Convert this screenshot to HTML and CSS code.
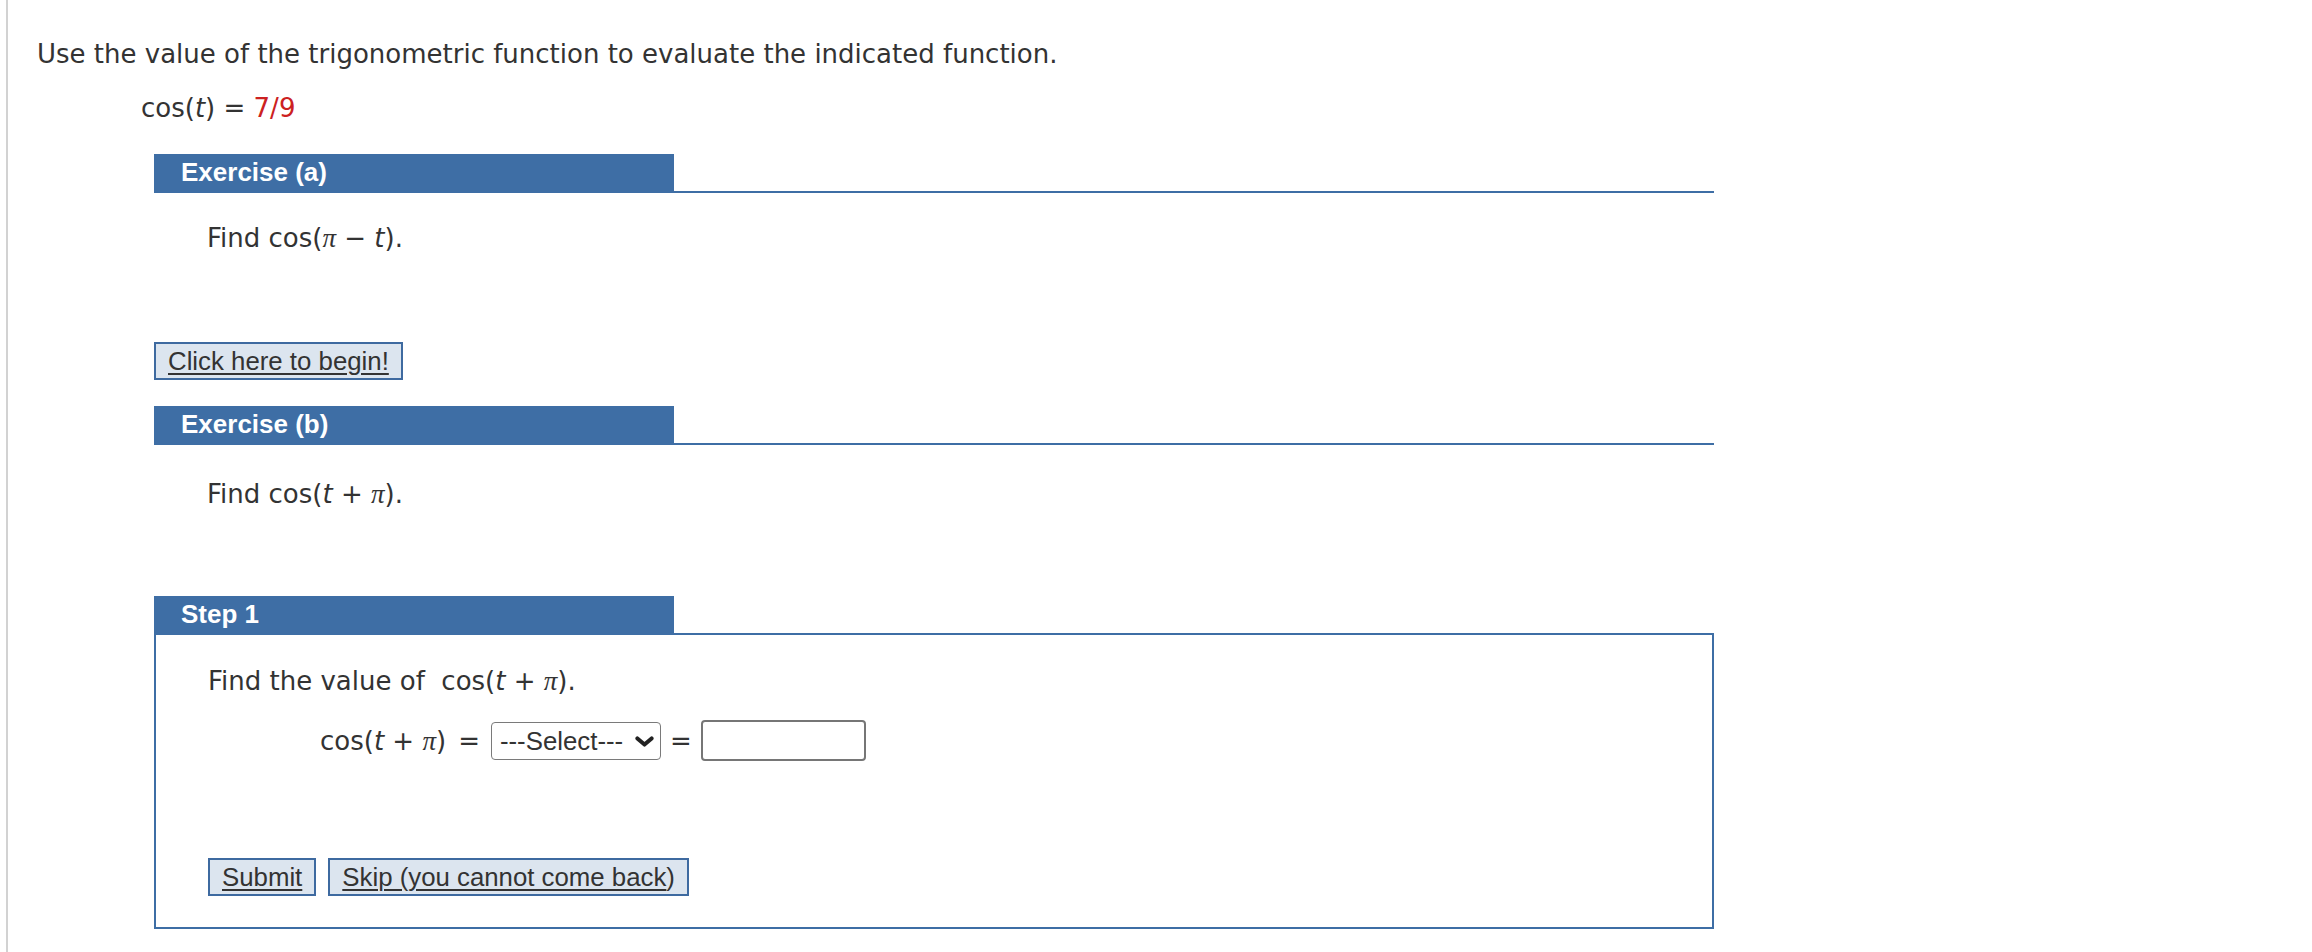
FILE: index.html
```html
<!DOCTYPE html>
<html>
<head>
    <meta charset="utf-8">
    <title>Trigonometric Functions</title>
    <link rel="stylesheet" href="styles.css">
</head>
<body>
    <div class="page">
        <p class="prompt">Use the value of the trigonometric function to evaluate the indicated function.</p>
        <p class="given">cos(<i class="v">t</i>) = <span class="val">7/9</span></p>

        <!-- Exercise (a) -->
        <div class="exercise ex-a">
            <div class="ex-head"><div class="ex-title">Exercise (a)</div></div>
            <p class="ex-q">Find cos(<i class="pi">π</i> − <i class="v">t</i>).</p>
            <button class="btn begin"><u>Click here to begin!</u></button>
        </div>

        <!-- Exercise (b) -->
        <div class="exercise ex-b">
            <div class="ex-head"><div class="ex-title">Exercise (b)</div></div>
            <p class="ex-q">Find cos(<i class="v">t</i> + <i class="pi">π</i>).</p>
        </div>

        <!-- Step 1 -->
        <div class="exercise step">
            <div class="ex-head"><div class="ex-title">Step 1</div></div>
            <div class="step-body">
                <p class="step-q">Find the value of&nbsp;&nbsp;cos(<i class="v">t</i> + <i class="pi">π</i>).</p>
                <div class="answer-row">
                    <span class="expr">cos(<i class="v">t</i> + <i class="pi">π</i>)</span>
                    <span class="eq">=</span>
                    <div class="select-wrap">
                        <select class="sel">
                            <option>---Select---</option>
                            <option>cos(t)</option>
                            <option>−cos(t)</option>
                            <option>sin(t)</option>
                            <option>−sin(t)</option>
                        </select>
                        <svg class="chev" width="19" height="11" viewBox="0 0 19 11">
                            <polyline points="2.4,2.4 9.5,8.6 16.6,2.4" fill="none" stroke="#222" stroke-width="4" stroke-linecap="round" stroke-linejoin="round"/>
                        </svg>
                    </div>
                    <span class="eq">=</span>
                    <input class="ans" type="text">
                </div>
                <div class="btn-row">
                    <button class="btn"><u>Submit</u></button>
                    <button class="btn"><u>Skip (you cannot come back</u>)</button>
                </div>
            </div>
        </div>
    </div>
</body>
</html>
```

FILE: styles.css
```css
body {
    margin: 0;
    background: #fff;
    color: #333;
    font-family: "DejaVu Sans", Verdana, sans-serif;
    font-size: 26px;
}
p {
    margin: 0;
    line-height: 36px;
}
.page {
    margin-left: 6px;
    border-left: 2px solid #d2d2d2;
    min-height: 100vh;
    box-sizing: border-box;
    padding: 36px 0 0 29px;
}
.v {
    font-style: oblique;
}
.pi {
    font-family: "Liberation Serif", "Times New Roman", serif;
    font-style: italic;
    font-size: 27px;
}
.given {
    margin: 18px 0 0 104px;
}
.val {
    color: #cc2121;
}

/* exercise blocks */
.exercise {
    margin-left: 117px;
    width: 1560px;
}
.ex-a { margin-top: 28px; }
.ex-b { margin-top: 26px; }
.step { margin-top: 84px; }
.ex-head {
    display: flex;
    border-bottom: 2px solid #3e6ea5;
}
.ex-title {
    width: 520px;
    height: 37px;
    box-sizing: border-box;
    padding-left: 27px;
    background: #3e6ea5;
    color: #fff;
    font-family: "Liberation Sans", Arial, sans-serif;
    font-size: 26px;
    font-weight: bold;
    line-height: 36px;
}
.ex-q {
    margin-top: 27px;
    padding-left: 53px;
}
.ex-b .ex-q {
    margin-top: 31px;
}

/* buttons */
.btn {
    height: 38px;
    margin: 0;
    padding: 0 12px;
    border: 2px solid #3e6aa0;
    background: #dce5ef;
    color: #333;
    font-family: "Liberation Sans", Arial, sans-serif;
    font-size: 25.8px;
    line-height: 34px;
    cursor: pointer;
}
.btn u {
    text-decoration-thickness: 2px;
    text-underline-offset: 3px;
}
.begin {
    margin-top: 86px;
    display: block;
}

/* step box */
.step-body {
    border: 2px solid #3e6ea5;
    border-top: none;
    padding: 28px 0 31px 52px;
}
.answer-row {
    display: flex;
    align-items: center;
    gap: 9px;
    margin: 21px 0 0 112px;
    height: 41px;
}
.expr {
    line-height: 36px;
    margin-right: 3px;
}
.eq {
    line-height: 36px;
}
.select-wrap {
    position: relative;
    margin-left: 2px;
}
.sel {
    appearance: none;
    -webkit-appearance: none;
    width: 170px;
    height: 38px;
    box-sizing: border-box;
    border: 1.5px solid #7a7a7a;
    border-radius: 4px;
    background: #fff;
    color: #333;
    padding: 0 0 0 8px;
    font-family: "Liberation Sans", Arial, sans-serif;
    font-size: 25.8px;
    display: block;
}
.chev {
    position: absolute;
    right: 7px;
    top: 14px;
    pointer-events: none;
}
.ans {
    width: 165px;
    height: 41px;
    box-sizing: border-box;
    border: 2px solid #767676;
    border-radius: 4px;
    font-size: 22px;
}
.btn-row {
    display: flex;
    gap: 12px;
    margin-top: 97px;
}
```
